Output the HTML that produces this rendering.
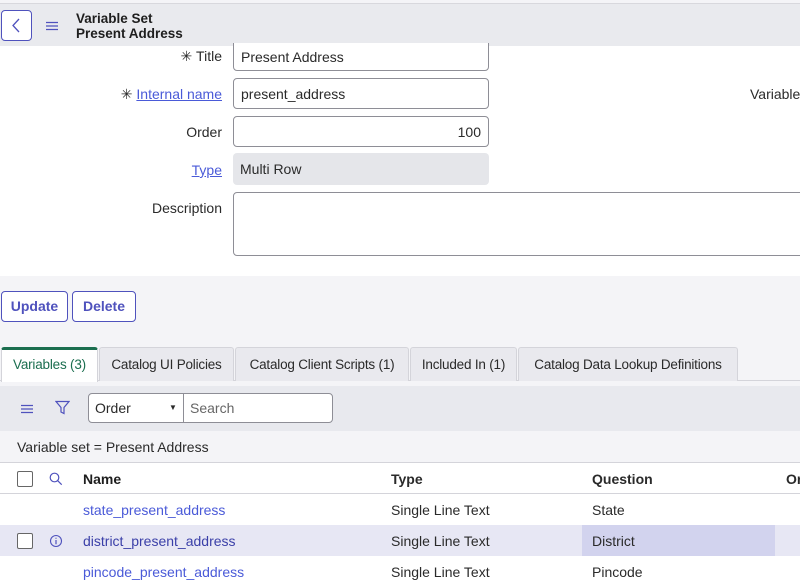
<!DOCTYPE html>
<html><head><style>
*{box-sizing:border-box;margin:0;padding:0}
body{width:800px;height:588px;overflow:hidden;font-family:"Liberation Sans",sans-serif;font-size:14px;color:#2a2a2a;background:#f4f4f7;position:relative}
.a{position:absolute}
.hdr{left:0;top:3px;width:800px;height:43px;background:#e9eaee;border-top:1px solid #d8d8dd}
.back{left:1px;top:10px;width:31px;height:31px;border:1px solid #4f52bd;border-radius:4px;background:#fff}
.form{left:0;top:46px;width:800px;height:230px;background:#fff}
.lbl{width:222px;text-align:right;left:0;font-size:14px}
.lnk{color:#4a5ad8;text-decoration:underline}
.inp{left:233px;width:256px;border:1px solid #8e8e96;border-radius:4px;background:#fff;padding:0 7px;display:flex;align-items:center}
.btn{top:291px;height:31px;border:1px solid #4f52bd;border-radius:4px;background:#fff;color:#4f52bd;font-weight:bold;text-align:center;line-height:29px}
.tab{top:347px;height:34px;background:#e9e9ee;border:1px solid #d4d4da;border-bottom:none;border-radius:3px 3px 0 0;line-height:33px;text-align:center;white-space:nowrap;font-size:13.5px;letter-spacing:-0.2px}
.cb{width:16px;height:16px;border:1px solid #666;border-radius:2px;background:#fff;left:17px}
.row{left:0;width:800px;height:31px;line-height:32px}
.row span{position:absolute}
.n{left:83px;color:#4a5ad8}
.t{left:391px}.q{left:592px}
</style></head><body>
<div class="a hdr"></div>
<div class="a back"><svg width="29" height="29" viewBox="0 0 29 29"><path d="M17 8l-6 6.5 6 6.5" fill="none" stroke="#4f52bd" stroke-width="1.3"/></svg></div>
<svg class="a" style="left:46px;top:21px" width="12" height="10"><path d="M0 1.5h12M0 5h12M0 8.5h12" stroke="#4f52bd" stroke-width="1.3"/></svg>
<div class="a" style="left:76px;top:11px;font-weight:bold;font-size:13.5px;line-height:15px;color:#1e1e1e">Variable Set<br>Present Address</div>
<div class="a form"></div>
<div class="a inp" style="top:42px;height:29px;border-radius:0 0 4px 4px">Present Address</div>
<div class="a hdr" style="height:39px;border:none;top:4px"></div>
<div class="a back"><svg width="29" height="29" viewBox="0 0 29 29"><path d="M17 8l-6 6.5 6 6.5" fill="none" stroke="#4f52bd" stroke-width="1.3"/></svg></div>
<svg class="a" style="left:46px;top:21px" width="12" height="10"><path d="M0 1.5h12M0 5h12M0 8.5h12" stroke="#4f52bd" stroke-width="1.3"/></svg>
<div class="a" style="left:76px;top:11px;font-weight:bold;font-size:13.5px;line-height:15px;color:#1e1e1e">Variable Set<br>Present Address</div>
<div class="a lbl" style="top:48px">✳&nbsp;Title</div>
<div class="a inp" style="top:78px;height:31px">present_address</div>
<div class="a lbl" style="top:86px">✳&nbsp;<span class="lnk">Internal name</span></div>
<div class="a" style="left:750px;top:86px">Variable</div>
<div class="a inp" style="top:116px;height:31px;justify-content:flex-end">100</div>
<div class="a lbl" style="top:124px">Order</div>
<div class="a inp" style="top:153px;height:32px;background:#e5e6ea;border:none">Multi Row</div>
<div class="a lbl" style="top:162px"><span class="lnk">Type</span></div>
<div class="a inp" style="top:192px;height:64px;width:580px"></div>
<div class="a lbl" style="top:200px">Description</div>
<div class="a btn" style="left:1px;width:67px">Update</div>
<div class="a btn" style="left:72px;width:64px">Delete</div>
<div class="a" style="left:0;top:380px;width:800px;height:1px;background:#d4d4da"></div>
<div class="a tab" style="left:1px;width:97px;background:#fff;border-top:3px solid #1b6e4f;color:#1b6e4f;line-height:29px;height:35px">Variables (3)</div>
<div class="a tab" style="left:99px;width:135px">Catalog UI Policies</div>
<div class="a tab" style="left:235px;width:174px">Catalog Client Scripts (1)</div>
<div class="a tab" style="left:410px;width:107px">Included In (1)</div>
<div class="a tab" style="left:518px;width:220px">Catalog Data Lookup Definitions</div>
<div class="a" style="left:0;top:386px;width:800px;height:45px;background:#e8e9ee"></div>
<svg class="a" style="left:21px;top:404px" width="12" height="10"><path d="M0 1.5h12M0 5h12M0 8.5h12" stroke="#4f52bd" stroke-width="1.3"/></svg>
<svg class="a" style="left:55px;top:400px" width="15" height="15"><path d="M1 1.5h13l-5 6v6l-3-1.5v-4.5z" fill="none" stroke="#4f52bd" stroke-width="1.2"/></svg>
<div class="a" style="left:88px;top:393px;width:96px;height:30px;border:1px solid #8e8e96;border-radius:4px 0 0 4px;background:#fff;padding-left:6px;line-height:28px">Order<span style="position:absolute;left:80px;top:0;font-size:8px">▼</span></div>
<div class="a" style="left:183px;top:393px;width:150px;height:30px;border:1px solid #8e8e96;border-radius:0 4px 4px 0;background:#fff;padding-left:6px;line-height:28px;color:#666">Search</div>
<div class="a" style="left:17px;top:439px">Variable set = Present Address</div>
<div class="a" style="left:0;top:462px;width:800px;height:126px;background:#fff;border-top:1px solid #d4d4da"></div>
<div class="a row" style="top:463px;border-bottom:1px solid #d4d4da;font-weight:bold"><span class="n" style="color:#1e1e1e">Name</span><span class="t">Type</span><span class="q">Question</span><span style="left:786px">Or</span></div>
<div class="a cb" style="top:471px"></div>
<svg class="a" style="left:49px;top:472px" width="14" height="14"><circle cx="5.5" cy="5.5" r="4.3" fill="none" stroke="#4f52bd" stroke-width="1.2"/><path d="M8.7 8.7l4 4" stroke="#4f52bd" stroke-width="1.2"/></svg>
<div class="a row" style="top:494px"><span class="n">state_present_address</span><span class="t">Single Line Text</span><span class="q">State</span></div>
<div class="a row" style="top:525px;background:#e7e7f4"><span style="left:582px;width:193px;height:31px;background:#d2d3ee"></span><span class="n" style="color:#3a3fa8">district_present_address</span><span class="t">Single Line Text</span><span class="q">District</span></div>
<div class="a cb" style="top:533px"></div>
<svg class="a" style="left:49px;top:534px" width="14" height="14"><circle cx="7" cy="7" r="5.5" fill="none" stroke="#4f52bd" stroke-width="1.1"/><path d="M7 6v4.2M7 3.8v1" stroke="#4f52bd" stroke-width="1.2"/></svg>
<div class="a row" style="top:556px"><span class="n">pincode_present_address</span><span class="t">Single Line Text</span><span class="q">Pincode</span></div>
</body></html>
